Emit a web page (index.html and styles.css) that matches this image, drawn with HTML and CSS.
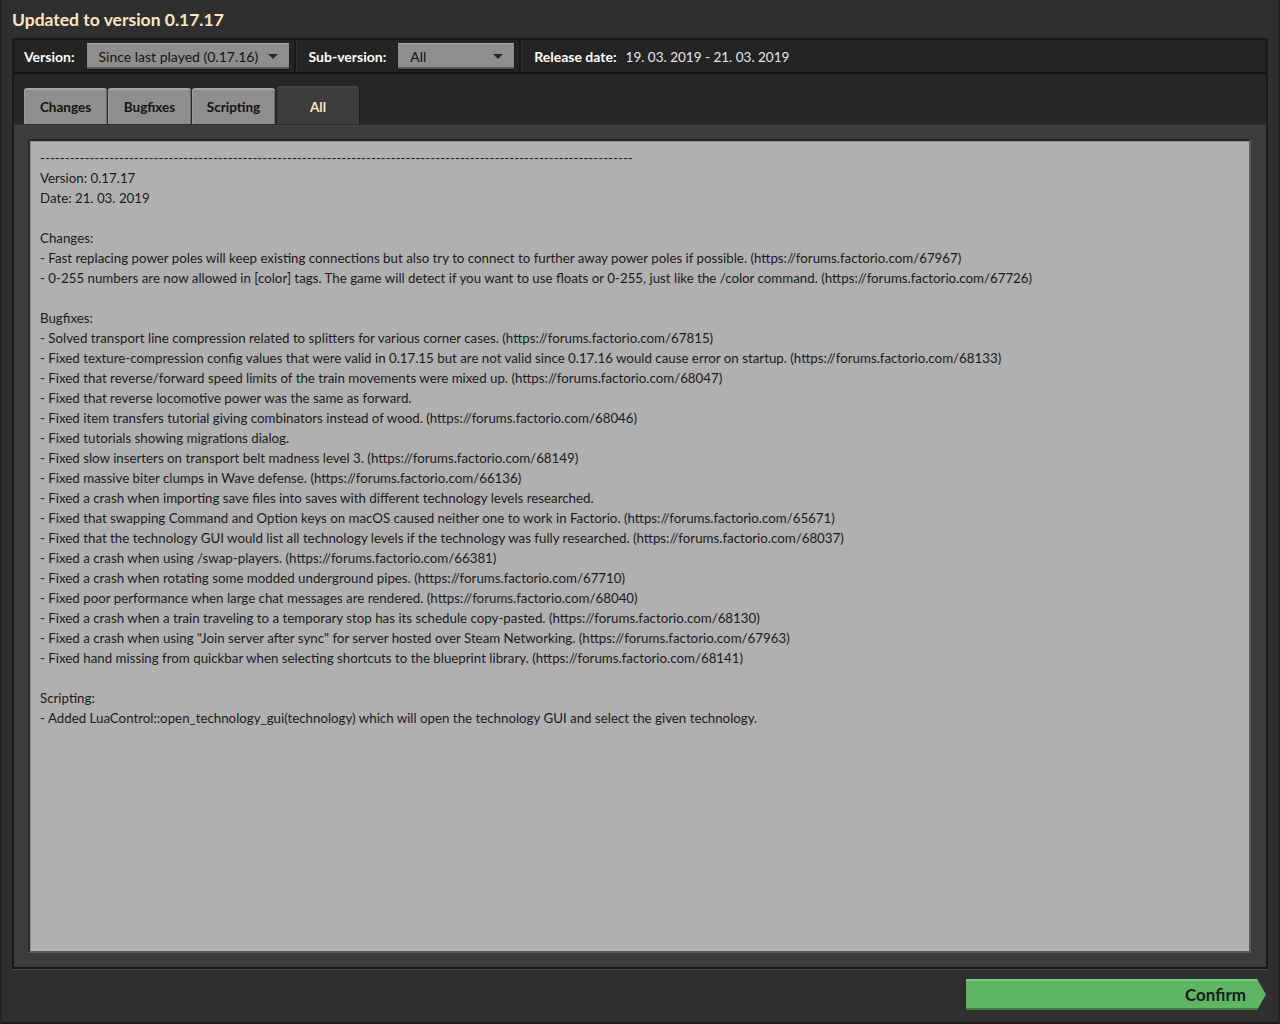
FILE: index.html
```html
<!DOCTYPE html>
<html lang="en">
<head>
    <meta charset="UTF-8">
    <title>Updated to version 0.17.17</title>
    <link rel="stylesheet" href="styles.css">
</head>
<body>

<div class="window">
    <div class="title">Updated to version 0.17.17</div>

    <div class="frame">
        <div class="toolbar">
            <div class="field">
                <span class="label">Version:</span>
                <div class="dropdown dropdown--wide">Since last played (0.17.16)<span class="caret"></span></div>
            </div>
            <div class="field">
                <span class="label">Sub-version:</span>
                <div class="dropdown dropdown--small">All<span class="caret"></span></div>
            </div>
            <div class="field field--last">
                <span class="label">Release date:</span>
                <span class="value">19. 03. 2019 - 21. 03. 2019</span>
            </div>
        </div>

        <div class="tabs">
            <div class="tab">Changes</div>
            <div class="tab">Bugfixes</div>
            <div class="tab">Scripting</div>
            <div class="tab tab--active">All</div>
        </div>

        <div class="panel">
            <div class="textbox">
<div>------------------------------------------------------------------------------------------------------------------------</div>
<div>Version: 0.17.17</div>
<div>Date: 21. 03. 2019</div>
<div>&nbsp;</div>
<div>Changes:</div>
<div>- Fast replacing power poles will keep existing connections but also try to connect to further away power poles if possible. (https://forums.factorio.com/67967)</div>
<div>- 0-255 numbers are now allowed in [color] tags. The game will detect if you want to use floats or 0-255, just like the /color command. (https://forums.factorio.com/67726)</div>
<div>&nbsp;</div>
<div>Bugfixes:</div>
<div>- Solved transport line compression related to splitters for various corner cases. (https://forums.factorio.com/67815)</div>
<div>- Fixed texture-compression config values that were valid in 0.17.15 but are not valid since 0.17.16 would cause error on startup. (https://forums.factorio.com/68133)</div>
<div>- Fixed that reverse/forward speed limits of the train movements were mixed up. (https://forums.factorio.com/68047)</div>
<div>- Fixed that reverse locomotive power was the same as forward.</div>
<div>- Fixed item transfers tutorial giving combinators instead of wood. (https://forums.factorio.com/68046)</div>
<div>- Fixed tutorials showing migrations dialog.</div>
<div>- Fixed slow inserters on transport belt madness level 3. (https://forums.factorio.com/68149)</div>
<div>- Fixed massive biter clumps in Wave defense. (https://forums.factorio.com/66136)</div>
<div>- Fixed a crash when importing save files into saves with different technology levels researched.</div>
<div>- Fixed that swapping Command and Option keys on macOS caused neither one to work in Factorio. (https://forums.factorio.com/65671)</div>
<div>- Fixed that the technology GUI would list all technology levels if the technology was fully researched. (https://forums.factorio.com/68037)</div>
<div>- Fixed a crash when using /swap-players. (https://forums.factorio.com/66381)</div>
<div>- Fixed a crash when rotating some modded underground pipes. (https://forums.factorio.com/67710)</div>
<div>- Fixed poor performance when large chat messages are rendered. (https://forums.factorio.com/68040)</div>
<div>- Fixed a crash when a train traveling to a temporary stop has its schedule copy-pasted. (https://forums.factorio.com/68130)</div>
<div>- Fixed a crash when using "Join server after sync" for server hosted over Steam Networking. (https://forums.factorio.com/67963)</div>
<div>- Fixed hand missing from quickbar when selecting shortcuts to the blueprint library. (https://forums.factorio.com/68141)</div>
<div>&nbsp;</div>
<div>Scripting:</div>
<div>- Added LuaControl::open_technology_gui(technology) which will open the technology GUI and select the given technology.</div>
            </div>
        </div>
    </div>

    <div class="footer">
        <button class="confirm">Confirm</button>
    </div>
</div>

</body>
</html>
```

FILE: styles.css
```css
* {
    margin: 0;
    padding: 0;
    box-sizing: border-box;
}

body {
    width: 1280px;
    height: 1024px;
    background-color: #2f2f2f;
    font-family: Lato, "Noto Sans", sans-serif;
    overflow: hidden;
}

.window {
    display: flex;
    flex-direction: column;
    height: 1024px;
    border-left: 2px solid #262220;
    border-right: 2px solid #262220;
    border-bottom: 2px solid #1c1c1c;
}

.title {
    height: 38px;
    padding: 9px 0 0 10px;
    font-size: 17.5px;
    font-weight: bold;
    color: #ffe6c0;
}

.frame {
    display: flex;
    flex-direction: column;
    height: 931px;
    margin: 0 10px;
    border: 2px solid #1a1a1a;
    border-bottom-color: #161616;
    box-shadow: 0 1px 0 #4a4848;
    background-color: #262626;
}

/* top bar with version pickers */
.toolbar {
    display: flex;
    height: 34px;
    border-bottom: 2px solid #161616;
    background-color: #242424;
}

.field {
    display: flex;
    align-items: center;
    gap: 12px;
    padding: 0 5px 0 13px;
    border-right: 2px solid #1a1a1a;
    box-shadow: 1px 0 0 #2e2e2e;
}

.field:first-child {
    padding-left: 10px;
}

.field--last {
    border-right: none;
    box-shadow: none;
    padding-left: 13px;
    gap: 9px;
}

.label {
    padding-top: 1px;
    font-size: 14px;
    font-weight: bold;
    color: #ffffff;
}

.value {
    padding-top: 1px;
    font-size: 13.5px;
    color: #e6e6e6;
}

.dropdown {
    position: relative;
    height: 26px;
    padding: 4px 0 0 12px;
    background-color: #8e8e8e;
    border-top: 1px solid #a8a8a8;
    border-bottom: 2px solid #5a5a5a;
    box-shadow: 0 1px 1px #111;
    font-size: 14px;
    color: #141414;
}

.dropdown--wide {
    width: 202px;
}

.dropdown--small {
    width: 116px;
}

.caret {
    position: absolute;
    right: 11px;
    top: 10px;
    width: 0;
    height: 0;
    border-left: 5px solid transparent;
    border-right: 5px solid transparent;
    border-top: 5px solid #262626;
}

/* tabs */
.tabs {
    display: flex;
    align-items: flex-end;
    gap: 1px;
    height: 50px;
    padding-left: 10px;
}

.tab {
    width: 83px;
    height: 36px;
    padding-top: 9px;
    background-color: #8e8e8e;
    border-top: 2px solid #a6a6a6;
    border-radius: 3px 3px 0 0;
    box-shadow: inset 1px 0 0 #9c9c9c, inset -1px 0 0 #707070;
    text-align: center;
    font-size: 13.5px;
    font-weight: bold;
    color: #141414;
}

.tab--active {
    margin-left: 1px;
    width: 82px;
    height: 38px;
    padding-top: 11px;
    background-color: #3c3c3c;
    border-top: 2px solid #464646;
    box-shadow: 1px 0 0 #1c1c1c;
    color: #ffe6c0;
}

/* content */
.panel {
    flex: 1;
    padding: 14px 15px 14px 14px;
    background-color: #3c3c3c;
    border-top: 1px solid #2a2a2a;
    box-shadow: inset 0 1px 0 #454545;
}

.textbox {
    height: 100%;
    padding: 7px 10px;
    background-color: #b0b0b0;
    border-top: 2px solid #262626;
    border-left: 2px solid #2c2c2c;
    border-right: 2px solid #5a5a5a;
    border-bottom: 2px solid #5a5a5a;
    box-shadow: inset 1px 1px 0 #8e8e8e;
    font-size: 13.3px;
    line-height: 20px;
    color: #1a1a1a;
    white-space: nowrap;
}

.footer {
    display: flex;
    justify-content: flex-end;
    padding: 10px 12px 0 0;
}

.confirm {
    width: 300px;
    height: 31px;
    padding-right: 20px;
    border: none;
    background-color: #5eb663;
    clip-path: polygon(0 0, 97% 0, 100% 50%, 97% 100%, 0 100%);
    box-shadow: inset 0 2px 0 #78cc7c, inset 0 -2px 0 #3d7a40;
    text-align: right;
    font-family: Lato, "Noto Sans", sans-serif;
    font-size: 17px;
    font-weight: bold;
    color: #1b1b1b;
}
```
